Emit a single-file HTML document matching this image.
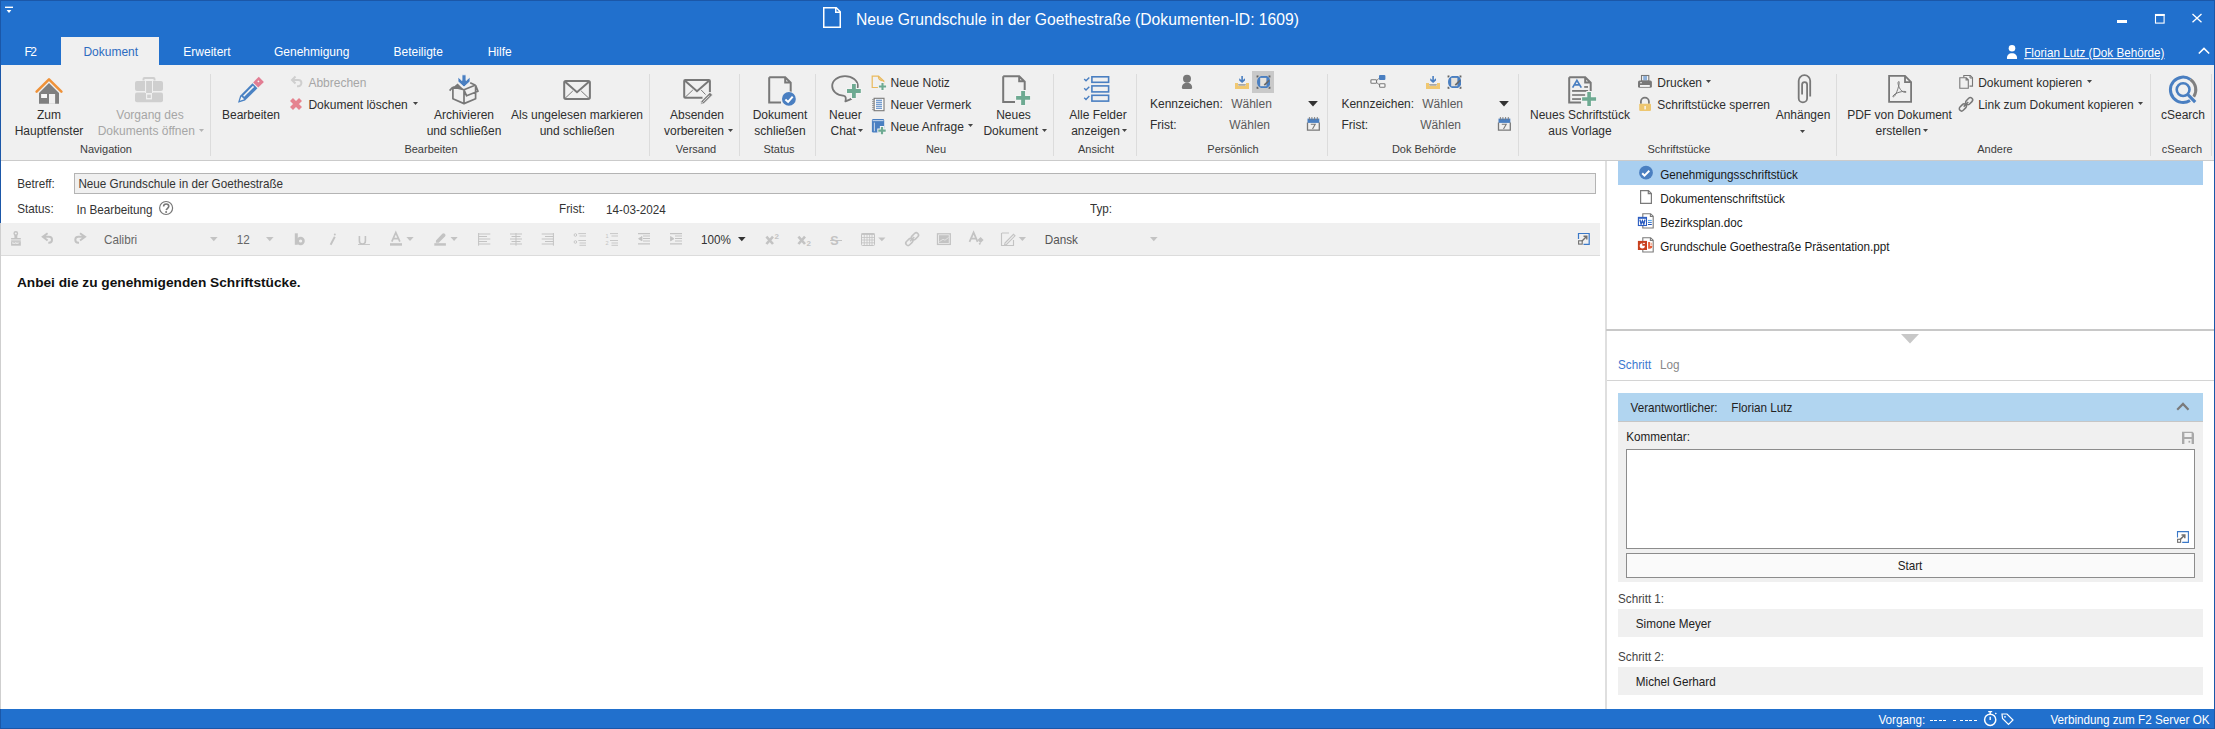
<!DOCTYPE html>
<html><head><meta charset="utf-8"><style>
html,body{margin:0;padding:0;}
body{width:2215px;height:729px;overflow:hidden;position:relative;background:#fff;font-family:"Liberation Sans", sans-serif;}
.t{position:absolute;white-space:nowrap;}
svg{overflow:visible}
</style></head><body>
<div style="position:absolute;left:0px;top:0px;width:2215px;height:65px;background:#2170cd"></div>
<div style="position:absolute;left:0px;top:65px;width:2215px;height:95px;background:#f0f0f0"></div>
<div style="position:absolute;left:0px;top:160px;width:2215px;height:1px;background:#cbcbcb"></div>
<div style="position:absolute;left:1px;top:223px;width:1599px;height:32px;background:#f0f0f0"></div>
<div style="position:absolute;left:1px;top:255px;width:1599px;height:1px;background:#dcdcdc"></div>
<div style="position:absolute;left:0px;top:709px;width:2215px;height:20px;background:#2170cd"></div>
<div style="position:absolute;left:0px;top:0px;width:1px;height:223px;background:#1b57a8"></div>
<div style="position:absolute;left:0px;top:223px;width:1px;height:486px;background:#cfcfcf"></div>
<div style="position:absolute;left:0px;top:709px;width:1px;height:20px;background:#1b57a8"></div>
<div style="position:absolute;left:2214px;top:0px;width:1px;height:729px;background:#1b57a8"></div>
<div style="position:absolute;left:0px;top:0px;width:2215px;height:1px;background:#1b57a8"></div>
<div style="position:absolute;left:0px;top:728px;width:2215px;height:1px;background:#1b57a8"></div>
<div class="t" style="left:856px;top:10.00px;font-size:15.7px;line-height:19px;color:#ffffff;font-weight:400;">Neue Grundschule in der Goethestraße (Dokumenten-ID: 1609)</div>
<div style="position:absolute;left:61px;top:37px;width:98px;height:28px;background:#f0f0f0"></div>
<div class="t" style="left:24.4px;top:44.50px;font-size:12px;line-height:15px;color:#fff;font-weight:400;letter-spacing:-1.4px;">F2</div>
<div class="t" style="left:83.4px;top:44.50px;font-size:12px;line-height:15px;color:#2d6cc0;font-weight:400;">Dokument</div>
<div class="t" style="left:183.3px;top:44.50px;font-size:12px;line-height:15px;color:#fff;font-weight:400;">Erweitert</div>
<div class="t" style="left:274px;top:44.50px;font-size:12px;line-height:15px;color:#fff;font-weight:400;">Genehmigung</div>
<div class="t" style="left:393.5px;top:44.50px;font-size:12px;line-height:15px;color:#fff;font-weight:400;">Beteiligte</div>
<div class="t" style="left:487.7px;top:44.50px;font-size:12px;line-height:15px;color:#fff;font-weight:400;">Hilfe</div>
<div class="t" style="left:2024.2px;top:44.50px;font-size:11.7px;line-height:15px;color:#fff;font-weight:400;transform:scaleY(1.1);transform-origin:0 12.0px;text-decoration:underline;">Florian Lutz (Dok Behörde)</div>
<div style="position:absolute;left:210px;top:74px;width:1px;height:82px;background:#dcdcdc"></div>
<div style="position:absolute;left:649px;top:74px;width:1px;height:82px;background:#dcdcdc"></div>
<div style="position:absolute;left:739px;top:74px;width:1px;height:82px;background:#dcdcdc"></div>
<div style="position:absolute;left:815px;top:74px;width:1px;height:82px;background:#dcdcdc"></div>
<div style="position:absolute;left:1053px;top:74px;width:1px;height:82px;background:#dcdcdc"></div>
<div style="position:absolute;left:1136px;top:74px;width:1px;height:82px;background:#dcdcdc"></div>
<div style="position:absolute;left:1327px;top:74px;width:1px;height:82px;background:#dcdcdc"></div>
<div style="position:absolute;left:1518px;top:74px;width:1px;height:82px;background:#dcdcdc"></div>
<div style="position:absolute;left:1836px;top:74px;width:1px;height:82px;background:#dcdcdc"></div>
<div style="position:absolute;left:2150px;top:74px;width:1px;height:82px;background:#dcdcdc"></div>
<div style="position:absolute;left:2211px;top:74px;width:1px;height:82px;background:#dcdcdc"></div>
<div class="t" style="left:49px;top:107.50px;font-size:12px;line-height:15px;color:#2e2e2e;font-weight:400;transform:translateX(-50%) ;transform-origin:0 11.5px;">Zum</div>
<div class="t" style="left:49px;top:123.50px;font-size:12px;line-height:15px;color:#2e2e2e;font-weight:400;transform:translateX(-50%) ;transform-origin:0 11.5px;">Hauptfenster</div>
<div class="t" style="left:150px;top:107.50px;font-size:12px;line-height:15px;color:#a6a6a6;font-weight:400;transform:translateX(-50%) ;transform-origin:0 11.5px;">Vorgang des</div>
<div class="t" style="left:97.7px;top:123.50px;font-size:12px;line-height:15px;color:#a6a6a6;font-weight:400;">Dokuments öffnen</div>
<div class="t" style="left:106px;top:142.00px;font-size:11px;line-height:14px;color:#3c3c3c;font-weight:400;transform:translateX(-50%) ;transform-origin:0 11.0px;">Navigation</div>
<div class="t" style="left:251px;top:107.50px;font-size:12px;line-height:15px;color:#2e2e2e;font-weight:400;transform:translateX(-50%) ;transform-origin:0 11.5px;">Bearbeiten</div>
<div class="t" style="left:308.4px;top:75.50px;font-size:12px;line-height:15px;color:#a6a6a6;font-weight:400;">Abbrechen</div>
<div class="t" style="left:308.4px;top:97.50px;font-size:12px;line-height:15px;color:#2e2e2e;font-weight:400;">Dokument löschen</div>
<div class="t" style="left:464px;top:107.50px;font-size:12px;line-height:15px;color:#2e2e2e;font-weight:400;transform:translateX(-50%) ;transform-origin:0 11.5px;">Archivieren</div>
<div class="t" style="left:464px;top:123.50px;font-size:12px;line-height:15px;color:#2e2e2e;font-weight:400;transform:translateX(-50%) ;transform-origin:0 11.5px;">und schließen</div>
<div class="t" style="left:577px;top:107.50px;font-size:12px;line-height:15px;color:#2e2e2e;font-weight:400;transform:translateX(-50%) ;transform-origin:0 11.5px;">Als ungelesen markieren</div>
<div class="t" style="left:577px;top:123.50px;font-size:12px;line-height:15px;color:#2e2e2e;font-weight:400;transform:translateX(-50%) ;transform-origin:0 11.5px;">und schließen</div>
<div class="t" style="left:431px;top:142.00px;font-size:11px;line-height:14px;color:#3c3c3c;font-weight:400;transform:translateX(-50%) ;transform-origin:0 11.0px;">Bearbeiten</div>
<div class="t" style="left:697px;top:107.50px;font-size:12px;line-height:15px;color:#2e2e2e;font-weight:400;transform:translateX(-50%) ;transform-origin:0 11.5px;">Absenden</div>
<div class="t" style="left:664px;top:123.50px;font-size:12px;line-height:15px;color:#2e2e2e;font-weight:400;">vorbereiten</div>
<div class="t" style="left:696px;top:142.00px;font-size:11px;line-height:14px;color:#3c3c3c;font-weight:400;transform:translateX(-50%) ;transform-origin:0 11.0px;">Versand</div>
<div class="t" style="left:780px;top:107.50px;font-size:12px;line-height:15px;color:#2e2e2e;font-weight:400;transform:translateX(-50%) ;transform-origin:0 11.5px;">Dokument</div>
<div class="t" style="left:780px;top:123.50px;font-size:12px;line-height:15px;color:#2e2e2e;font-weight:400;transform:translateX(-50%) ;transform-origin:0 11.5px;">schließen</div>
<div class="t" style="left:779px;top:142.00px;font-size:11px;line-height:14px;color:#3c3c3c;font-weight:400;transform:translateX(-50%) ;transform-origin:0 11.0px;">Status</div>
<div class="t" style="left:845.4px;top:107.50px;font-size:12px;line-height:15px;color:#2e2e2e;font-weight:400;transform:translateX(-50%) ;transform-origin:0 11.5px;">Neuer</div>
<div class="t" style="left:830.5px;top:123.50px;font-size:12px;line-height:15px;color:#2e2e2e;font-weight:400;">Chat</div>
<div class="t" style="left:890.5px;top:75.50px;font-size:12px;line-height:15px;color:#2e2e2e;font-weight:400;">Neue Notiz</div>
<div class="t" style="left:890.5px;top:97.50px;font-size:12px;line-height:15px;color:#2e2e2e;font-weight:400;">Neuer Vermerk</div>
<div class="t" style="left:890.5px;top:119.50px;font-size:12px;line-height:15px;color:#2e2e2e;font-weight:400;">Neue Anfrage</div>
<div class="t" style="left:936px;top:142.00px;font-size:11px;line-height:14px;color:#3c3c3c;font-weight:400;transform:translateX(-50%) ;transform-origin:0 11.0px;">Neu</div>
<div class="t" style="left:1013.5px;top:107.50px;font-size:12px;line-height:15px;color:#2e2e2e;font-weight:400;transform:translateX(-50%) ;transform-origin:0 11.5px;">Neues</div>
<div class="t" style="left:983.4px;top:123.50px;font-size:12px;line-height:15px;color:#2e2e2e;font-weight:400;">Dokument</div>
<div class="t" style="left:1098px;top:107.50px;font-size:12px;line-height:15px;color:#2e2e2e;font-weight:400;transform:translateX(-50%) ;transform-origin:0 11.5px;">Alle Felder</div>
<div class="t" style="left:1071.2px;top:123.50px;font-size:12px;line-height:15px;color:#2e2e2e;font-weight:400;">anzeigen</div>
<div class="t" style="left:1096px;top:142.00px;font-size:11px;line-height:14px;color:#3c3c3c;font-weight:400;transform:translateX(-50%) ;transform-origin:0 11.0px;">Ansicht</div>
<div class="t" style="left:1150px;top:96.50px;font-size:12px;line-height:15px;color:#2e2e2e;font-weight:400;">Kennzeichen:</div>
<div class="t" style="left:1150px;top:117.80px;font-size:12px;line-height:15px;color:#2e2e2e;font-weight:400;">Frist:</div>
<div class="t" style="left:1231.2px;top:96.50px;font-size:12px;line-height:15px;color:#5a5a5a;font-weight:400;">Wählen</div>
<div class="t" style="left:1229.3px;top:117.80px;font-size:12px;line-height:15px;color:#5a5a5a;font-weight:400;">Wählen</div>
<div class="t" style="left:1233px;top:142.00px;font-size:11px;line-height:14px;color:#3c3c3c;font-weight:400;transform:translateX(-50%) ;transform-origin:0 11.0px;">Persönlich</div>
<div class="t" style="left:1341.4px;top:96.50px;font-size:12px;line-height:15px;color:#2e2e2e;font-weight:400;">Kennzeichen:</div>
<div class="t" style="left:1341.4px;top:117.80px;font-size:12px;line-height:15px;color:#2e2e2e;font-weight:400;">Frist:</div>
<div class="t" style="left:1422.3px;top:96.50px;font-size:12px;line-height:15px;color:#5a5a5a;font-weight:400;">Wählen</div>
<div class="t" style="left:1420.3px;top:117.80px;font-size:12px;line-height:15px;color:#5a5a5a;font-weight:400;">Wählen</div>
<div class="t" style="left:1424px;top:142.00px;font-size:11px;line-height:14px;color:#3c3c3c;font-weight:400;transform:translateX(-50%) ;transform-origin:0 11.0px;">Dok Behörde</div>
<div class="t" style="left:1580px;top:107.50px;font-size:12px;line-height:15px;color:#2e2e2e;font-weight:400;transform:translateX(-50%) ;transform-origin:0 11.5px;">Neues Schriftstück</div>
<div class="t" style="left:1580px;top:123.50px;font-size:12px;line-height:15px;color:#2e2e2e;font-weight:400;transform:translateX(-50%) ;transform-origin:0 11.5px;">aus Vorlage</div>
<div class="t" style="left:1657.3px;top:75.50px;font-size:12px;line-height:15px;color:#2e2e2e;font-weight:400;">Drucken</div>
<div class="t" style="left:1657.3px;top:97.50px;font-size:12px;line-height:15px;color:#2e2e2e;font-weight:400;">Schriftstücke sperren</div>
<div class="t" style="left:1679px;top:142.00px;font-size:11px;line-height:14px;color:#3c3c3c;font-weight:400;transform:translateX(-50%) ;transform-origin:0 11.0px;">Schriftstücke</div>
<div class="t" style="left:1803px;top:107.50px;font-size:12px;line-height:15px;color:#2e2e2e;font-weight:400;transform:translateX(-50%) ;transform-origin:0 11.5px;">Anhängen</div>
<div class="t" style="left:1899.5px;top:107.50px;font-size:12px;line-height:15px;color:#2e2e2e;font-weight:400;transform:translateX(-50%) ;transform-origin:0 11.5px;">PDF von Dokument</div>
<div class="t" style="left:1875.5px;top:123.50px;font-size:12px;line-height:15px;color:#2e2e2e;font-weight:400;">erstellen</div>
<div class="t" style="left:1978.2px;top:75.50px;font-size:12px;line-height:15px;color:#2e2e2e;font-weight:400;">Dokument kopieren</div>
<div class="t" style="left:1978.2px;top:97.50px;font-size:12px;line-height:15px;color:#2e2e2e;font-weight:400;">Link zum Dokument kopieren</div>
<div class="t" style="left:1995px;top:142.00px;font-size:11px;line-height:14px;color:#3c3c3c;font-weight:400;transform:translateX(-50%) ;transform-origin:0 11.0px;">Andere</div>
<div class="t" style="left:2183px;top:107.50px;font-size:12px;line-height:15px;color:#2e2e2e;font-weight:400;transform:translateX(-50%) ;transform-origin:0 11.5px;">cSearch</div>
<div class="t" style="left:2182px;top:142.00px;font-size:11px;line-height:14px;color:#3c3c3c;font-weight:400;transform:translateX(-50%) ;transform-origin:0 11.0px;">cSearch</div>
<div class="t" style="left:17.3px;top:176.00px;font-size:11.7px;line-height:15px;color:#333;font-weight:400;transform:scaleY(1.1);transform-origin:0 12.0px;">Betreff:</div>
<div style="position:absolute;left:74px;top:173px;width:1522px;height:21px;background:#f0f0f0;box-sizing:border-box;border:1px solid #b4b4b4"></div>
<div class="t" style="left:78.4px;top:176.00px;font-size:11.7px;line-height:15px;color:#333;font-weight:400;transform:scaleY(1.1);transform-origin:0 12.0px;">Neue Grundschule in der Goethestraße</div>
<div class="t" style="left:17.3px;top:201.00px;font-size:11.7px;line-height:15px;color:#333;font-weight:400;transform:scaleY(1.1);transform-origin:0 12.0px;">Status:</div>
<div class="t" style="left:76.5px;top:202.00px;font-size:11.7px;line-height:15px;color:#333;font-weight:400;transform:scaleY(1.1);transform-origin:0 12.0px;">In Bearbeitung</div>
<div class="t" style="left:559px;top:201.00px;font-size:11.7px;line-height:15px;color:#333;font-weight:400;transform:scaleY(1.1);transform-origin:0 12.0px;">Frist:</div>
<div class="t" style="left:606px;top:202.00px;font-size:11.7px;line-height:15px;color:#333;font-weight:400;transform:scaleY(1.1);transform-origin:0 12.0px;">14-03-2024</div>
<div class="t" style="left:1090px;top:201.00px;font-size:11.7px;line-height:15px;color:#333;font-weight:400;transform:scaleY(1.1);transform-origin:0 12.0px;">Typ:</div>
<div class="t" style="left:104px;top:231.50px;font-size:11.7px;line-height:15px;color:#666;font-weight:400;transform:scaleY(1.1);transform-origin:0 12.0px;">Calibri</div>
<div class="t" style="left:236.7px;top:231.50px;font-size:11.7px;line-height:15px;color:#666;font-weight:400;transform:scaleY(1.1);transform-origin:0 12.0px;">12</div>
<div class="t" style="left:701px;top:231.80px;font-size:11.7px;line-height:15px;color:#333;font-weight:400;transform:scaleY(1.1);transform-origin:0 12.0px;">100%</div>
<div class="t" style="left:1044.7px;top:231.80px;font-size:11.7px;line-height:15px;color:#555;font-weight:400;transform:scaleY(1.1);transform-origin:0 12.0px;">Dansk</div>
<div class="t" style="left:16.9px;top:274.00px;font-size:13.7px;line-height:17px;color:#111;font-weight:700;">Anbei die zu genehmigenden Schriftstücke.</div>
<div style="position:absolute;left:1605px;top:161px;width:2px;height:548px;background:#dfdfdf"></div>
<div style="position:absolute;left:1618px;top:161px;width:585px;height:24px;background:#a9cff0"></div>
<div class="t" style="left:1660.2px;top:166.50px;font-size:11.7px;line-height:15px;color:#1a1a1a;font-weight:400;transform:scaleY(1.1);transform-origin:0 12.0px;">Genehmigungsschriftstück</div>
<div class="t" style="left:1660.2px;top:190.50px;font-size:11.7px;line-height:15px;color:#1a1a1a;font-weight:400;transform:scaleY(1.1);transform-origin:0 12.0px;">Dokumentenschriftstück</div>
<div class="t" style="left:1660.2px;top:214.50px;font-size:11.7px;line-height:15px;color:#1a1a1a;font-weight:400;transform:scaleY(1.1);transform-origin:0 12.0px;">Bezirksplan.doc</div>
<div class="t" style="left:1660.2px;top:238.50px;font-size:11.7px;line-height:15px;color:#1a1a1a;font-weight:400;transform:scaleY(1.1);transform-origin:0 12.0px;">Grundschule Goethestraße Präsentation.ppt</div>
<div style="position:absolute;left:1606px;top:329px;width:608px;height:2px;background:#c8c8c8"></div>
<div class="t" style="left:1618px;top:357.00px;font-size:11.7px;line-height:15px;color:#3b78d0;font-weight:400;transform:scaleY(1.1);transform-origin:0 12.0px;">Schritt</div>
<div class="t" style="left:1660px;top:357.00px;font-size:11.7px;line-height:15px;color:#888;font-weight:400;transform:scaleY(1.1);transform-origin:0 12.0px;">Log</div>
<div style="position:absolute;left:1607px;top:380px;width:607px;height:1px;background:#d4d4d4"></div>
<div style="position:absolute;left:1618px;top:393px;width:585px;height:28px;background:#b1d5f0"></div>
<div class="t" style="left:1630.5px;top:400.00px;font-size:11.7px;line-height:15px;color:#222;font-weight:400;transform:scaleY(1.1);transform-origin:0 12.0px;">Verantwortlicher:</div>
<div class="t" style="left:1731.3px;top:400.00px;font-size:11.7px;line-height:15px;color:#222;font-weight:400;transform:scaleY(1.1);transform-origin:0 12.0px;">Florian Lutz</div>
<div style="position:absolute;left:1618px;top:421px;width:585px;height:161px;background:#f0f0f0"></div>
<div class="t" style="left:1626.3px;top:429.00px;font-size:11.7px;line-height:15px;color:#222;font-weight:400;transform:scaleY(1.1);transform-origin:0 12.0px;">Kommentar:</div>
<div style="position:absolute;left:1626px;top:449px;width:569px;height:100px;background:#fff;box-sizing:border-box;border:1px solid #8c8c8c"></div>
<div style="position:absolute;left:1626px;top:553px;width:569px;height:25px;background:#fafafa;box-sizing:border-box;border:1px solid #8c8c8c"></div>
<div class="t" style="left:1910px;top:558.00px;font-size:11.7px;line-height:15px;color:#222;font-weight:400;transform:translateX(-50%) scaleY(1.1);transform-origin:0 12.0px;">Start</div>
<div class="t" style="left:1618px;top:590.50px;font-size:11.7px;line-height:15px;color:#444;font-weight:400;transform:scaleY(1.1);transform-origin:0 12.0px;">Schritt 1:</div>
<div style="position:absolute;left:1618px;top:609px;width:585px;height:28px;background:#f0f0f0"></div>
<div class="t" style="left:1635.8px;top:615.50px;font-size:11.7px;line-height:15px;color:#222;font-weight:400;transform:scaleY(1.1);transform-origin:0 12.0px;">Simone Meyer</div>
<div class="t" style="left:1618px;top:648.50px;font-size:11.7px;line-height:15px;color:#444;font-weight:400;transform:scaleY(1.1);transform-origin:0 12.0px;">Schritt 2:</div>
<div style="position:absolute;left:1618px;top:667px;width:585px;height:28px;background:#f0f0f0"></div>
<div class="t" style="left:1635.8px;top:673.50px;font-size:11.7px;line-height:15px;color:#222;font-weight:400;transform:scaleY(1.1);transform-origin:0 12.0px;">Michel Gerhard</div>
<div class="t" style="left:1878.4px;top:712.00px;font-size:11.7px;line-height:15px;color:#fff;font-weight:400;transform:scaleY(1.1);transform-origin:0 12.0px;">Vorgang:</div>
<div style="position:absolute;left:1929.5px;top:720px;width:3.3px;height:1.2px;background:#fff"></div>
<div style="position:absolute;left:1934px;top:720px;width:3.3px;height:1.2px;background:#fff"></div>
<div style="position:absolute;left:1938.5px;top:720px;width:3.3px;height:1.2px;background:#fff"></div>
<div style="position:absolute;left:1943px;top:720px;width:3.3px;height:1.2px;background:#fff"></div>
<div style="position:absolute;left:1952.5px;top:720px;width:3.3px;height:1.2px;background:#fff"></div>
<div style="position:absolute;left:1960px;top:720px;width:3.3px;height:1.2px;background:#fff"></div>
<div style="position:absolute;left:1964.5px;top:720px;width:3.3px;height:1.2px;background:#fff"></div>
<div style="position:absolute;left:1969px;top:720px;width:3.3px;height:1.2px;background:#fff"></div>
<div style="position:absolute;left:1973.5px;top:720px;width:3.3px;height:1.2px;background:#fff"></div>
<div class="t" style="left:2050.4px;top:712.00px;font-size:11.7px;line-height:15px;color:#fff;font-weight:400;transform:scaleY(1.1);transform-origin:0 12.0px;">Verbindung zum F2 Server OK</div>
<svg style="position:absolute;left:816px;top:2px" width="32" height="32" viewBox="0 0 32 32"><path d="M7.75,5.75 H20.3 L24.25,9.7 V25.25 H7.75 Z M19.75,5.75 V10.25 H24.25" fill="none" stroke="#fff" stroke-width="1.5"/></svg>
<svg style="position:absolute;left:0px;top:0px" width="20" height="20" viewBox="0 0 20 20"><rect x="5" y="6.6" width="8" height="1.4" fill="#fff"/><path d="M6.6,10 H11.4 L9,13 Z" fill="#fff"/></svg>
<div style="position:absolute;left:2117px;top:20px;width:10px;height:3px;background:#fff"></div>
<svg style="position:absolute;left:2150px;top:8px" width="20" height="20" viewBox="0 0 20 20"><rect x="5.5" y="6.5" width="8.6" height="8.6" fill="none" stroke="#fff" stroke-width="1.1"/><rect x="5" y="6" width="9.6" height="2" fill="#fff"/></svg>
<svg style="position:absolute;left:2186px;top:8px" width="20" height="20" viewBox="0 0 20 20"><path d="M6.5,6 L15.5,14.2 M15.5,6 L6.5,14.2" stroke="#fff" stroke-width="1.3"/></svg>
<svg style="position:absolute;left:2004px;top:42px" width="16" height="20" viewBox="0 0 16 20"><circle cx="8" cy="6.2" r="3.3" fill="#fff"/><path d="M3,17 C2.5,13 5,11.2 8,11.2 C11,11.2 13.5,13 13,17 Z" fill="#fff"/></svg>
<svg style="position:absolute;left:2194px;top:42px" width="20" height="16" viewBox="0 0 20 16"><path d="M4.8,11.5 L10,6.4 L15.2,11.5" fill="none" stroke="#fff" stroke-width="1.6"/></svg>
<svg style="position:absolute;left:32px;top:74px" width="34" height="34" viewBox="0 0 34 34"><path d="M7,18.9 L17,8.9 L27,18.9 V29.8 H7 Z" fill="#7f7f7f"/><rect x="9.1" y="20" width="5.9" height="4" fill="#f6f6f6"/><rect x="17" y="20" width="6.1" height="9.8" fill="#f0f0f0"/><path d="M4.6,17.6 L17,5.4 L29.4,17.6" fill="none" stroke="#ef9239" stroke-width="2.6" stroke-linecap="round" stroke-linejoin="round"/></svg>
<svg style="position:absolute;left:132px;top:74px" width="34" height="34" viewBox="0 0 34 34"><rect x="3" y="7" width="28" height="10" rx="2" fill="#cfcfcf"/><rect x="3" y="18.4" width="28" height="9.8" rx="2" fill="#cfcfcf"/><path d="M11.5,6.5 V5 Q11.5,4 12.5,4 H21.5 Q22.5,4 22.5,5 V6.5" fill="none" stroke="#cfcfcf" stroke-width="2"/><rect x="13" y="6" width="8" height="13" fill="#f0f0f0"/><rect x="14.1" y="7" width="5.9" height="12" fill="#cfcfcf"/><rect x="14" y="19" width="6" height="6.4" fill="#f0f0f0"/><rect x="15.2" y="20.6" width="3.6" height="3.4" fill="#cfcfcf"/></svg>
<svg style="position:absolute;left:234px;top:74px" width="34" height="34" viewBox="0 0 34 34"><g transform="translate(4,28.7) rotate(-45)"><path d="M0,0 L6.5,-3.5 H24 V3.5 H6.5 Z" fill="#4a82c3"/><path d="M2.6,0 L6.8,-2 V2 Z" fill="#f4f4f4"/><rect x="8.5" y="-1.3" width="14" height="1.5" fill="#f4f4f4"/><rect x="25" y="-3.6" width="8" height="7.2" fill="#e27d93"/><circle cx="29.5" cy="-0.6" r="0.9" fill="#f4f4f4"/></g></svg>
<svg style="position:absolute;left:446px;top:72px" width="36" height="36" viewBox="0 0 36 36"><path d="M6.9,15.5 L11.6,11.4 L18,17.8 Z" fill="#787878"/><path d="M6.9,15 V26.7 L18,31.6 L29.6,26.7 V14.5 M18,31.6 V17.8 M6.9,15 L18,17.8 L29.6,13 M6.9,15 L3.6,18.6 M29.6,13.2 L32,19.2 L20.6,23.8 L18.3,18.6 M24.2,10.8 L29.6,13.2" fill="none" stroke="#787878" stroke-width="1.7" stroke-linejoin="round"/><path d="M16,2.8 H20 V8.6 L24,5 V9.6 L18,15 L12,9.6 V5 L16,8.6 Z" fill="#4a7fc1" stroke="#f4f4f4" stroke-width="0.8"/></svg>
<svg style="position:absolute;left:560px;top:74px" width="36" height="36" viewBox="0 0 36 36"><rect x="4.2" y="6.9" width="25.7" height="18" rx="1.6" fill="none" stroke="#787878" stroke-width="2"/><path d="M4.8,7.5 L17,18.2 L29.3,7.5" fill="none" stroke="#787878" stroke-width="2"/><path d="M5,24.4 L12.8,17 M29,24.4 L21.2,17" stroke="#787878" stroke-width="1"/></svg>
<svg style="position:absolute;left:680px;top:74px" width="36" height="36" viewBox="0 0 36 36"><path d="M22.5,23.7 H5.2 Q4.2,23.7 4.2,22.7 V6.9 Q4.2,5.9 5.2,5.9 H28.9 Q29.9,5.9 29.9,6.9 V18" fill="none" stroke="#787878" stroke-width="2"/><path d="M4.8,6.5 L17,17.2 L29.3,6.5" fill="none" stroke="#787878" stroke-width="2"/><path d="M5,23.4 L12.8,16 M25.5,20.5 L21.2,16" stroke="#787878" stroke-width="1"/><g transform="translate(20.3,30.6) rotate(-45)"><path d="M0,0 L3,-1.9 H15.5 V1.9 H3 Z" fill="#787878" stroke="#f4f4f4" stroke-width="0.8"/><path d="M1.3,0 L3,-0.9 V0.9 Z" fill="#f4f4f4"/><rect x="4" y="-0.35" width="9" height="0.7" fill="#f4f4f4"/></g></svg>
<svg style="position:absolute;left:764px;top:72px" width="36" height="36" viewBox="0 0 36 36"><path d="M5.2,5.2 H21.2 L26.7,10.7 V22 M17,30.6 H5.2 V5.2 M21.2,5.2 V10.5 H26.7" fill="none" stroke="#787878" stroke-width="2"/><circle cx="24.9" cy="26.9" r="7.6" fill="#f0f0f0"/><circle cx="24.9" cy="26.9" r="6.9" fill="#4a7fc1"/><path d="M21.4,27.6 L24.1,29.9 L28.7,24.6" fill="none" stroke="#fff" stroke-width="2"/></svg>
<svg style="position:absolute;left:828px;top:72px" width="36" height="36" viewBox="0 0 36 36"><path d="M16.3,23.8 C8.5,23.5 4.2,19 4.2,14 C4.2,8.2 9.8,4.2 17,4.2 C24.2,4.2 29.8,8.2 29.8,14 C29.8,15 29.6,15.8 29.3,16.6 M16.3,23.8 C18,24.5 18,27 17.4,29.4 C19.5,28.6 22,27.6 23.7,26.6" fill="none" stroke="#787878" stroke-width="1.8" stroke-linejoin="round"/><path d="M24.0,12.1 h3.8 v5.0 h5.0 v3.8 h-5.0 v5.0 h-3.8 v-5.0 h-5.0 v-3.8 h5.0z" fill="none" stroke="#f4f4f4" stroke-width="2"/><path d="M24.0,12.1 h3.8 v5.0 h5.0 v3.8 h-5.0 v5.0 h-3.8 v-5.0 h-5.0 v-3.8 h5.0z" fill="#6eaa92"/></svg>
<svg style="position:absolute;left:998px;top:72px" width="36" height="36" viewBox="0 0 36 36"><path d="M5.2,4.2 H21.2 L26.7,9.7 V19 M17,29.9 H5.2 V4.2 M21.2,4.2 V9.2 H26.7" fill="none" stroke="#787878" stroke-width="2"/><path d="M23.150000000000002,18.9 h3.9 v5.05 h5.05 v3.9 h-5.05 v5.05 h-3.9 v-5.05 h-5.05 v-3.9 h5.05z" fill="none" stroke="#f4f4f4" stroke-width="2"/><path d="M23.150000000000002,18.9 h3.9 v5.05 h5.05 v3.9 h-5.05 v5.05 h-3.9 v-5.05 h-5.05 v-3.9 h5.05z" fill="#6eaa92"/></svg>
<svg style="position:absolute;left:1080px;top:72px" width="36" height="36" viewBox="0 0 36 36"><rect x="11.9" y="4.8" width="16.7" height="5.5" fill="none" stroke="#4a7fc1" stroke-width="1.6"/><rect x="11.9" y="13.9" width="16.7" height="6" fill="none" stroke="#4a7fc1" stroke-width="1.6"/><rect x="11.9" y="23.3" width="16.7" height="5.8" fill="none" stroke="#4a7fc1" stroke-width="1.6"/><path d="M4.2,7 L6,8.7 L9.3,5.4 M4.2,16.3 L6,18 L9.3,14.7 M4.2,25.7 L6,27.4 L9.3,24.1" fill="none" stroke="#4a7fc1" stroke-width="1.4"/></svg>
<svg style="position:absolute;left:1564px;top:72px" width="36" height="36" viewBox="0 0 36 36"><path d="M5.2,5.2 H21.2 L26.7,10.7 V20 M17,30.6 H5.2 V5.2 M21.2,5.2 V10.5 H26.7" fill="none" stroke="#787878" stroke-width="2"/><path d="M8.6,15.6 L12.9,8.3 L17.3,15.6 M10.4,12.8 H15.5" fill="none" stroke="#4a7fc1" stroke-width="1.7"/><rect x="20.2" y="14.1" width="3.8" height="1.7" fill="#787878"/><rect x="8.1" y="18" width="16" height="1.8" fill="#787878"/><rect x="8.1" y="22.2" width="13" height="1.6" fill="#787878"/><rect x="8.1" y="26.2" width="9" height="1.7" fill="#787878"/><path d="M23.3,20.0 h3.6 v5.2 h5.2 v3.6 h-5.2 v5.2 h-3.6 v-5.2 h-5.2 v-3.6 h5.2z" fill="none" stroke="#f4f4f4" stroke-width="2"/><path d="M23.3,20.0 h3.6 v5.2 h5.2 v3.6 h-5.2 v5.2 h-3.6 v-5.2 h-5.2 v-3.6 h5.2z" fill="#6eaa92"/></svg>
<svg style="position:absolute;left:1790px;top:70px" width="30" height="38" viewBox="0 0 30 38"><path d="M20.2,26.6 V10.85 A5.75,5.75 0 0 0 8.7,10.85 V28.2 A4.2,4.2 0 0 0 17.1,28.2 V14.6 A2.5,2.5 0 0 0 12.1,14.6 V24.5" fill="none" stroke="#787878" stroke-width="1.8"/></svg>
<svg style="position:absolute;left:1884px;top:72px" width="32" height="34" viewBox="0 0 32 34"><path d="M5.1,3.9 H21 L27.1,10 V29.9 H5.1 Z M21,3.9 V10.2 H27.1" fill="none" stroke="#787878" stroke-width="1.8"/><path d="M14.7,9.5 C13.6,10 14,12 14.7,14 C15.5,16.5 17,18.8 19.5,20 C21,20.6 22.5,20.6 22,19.8 C21.4,19 18,19.4 15,20.3 C12.5,21 10,22.5 9,24 C8.4,25 9.5,25.2 10.4,24.2 C12,22.5 14,17 14.9,13 C15.3,11 15.4,9.3 14.7,9.5 Z" fill="none" stroke="#787878" stroke-width="1"/></svg>
<svg style="position:absolute;left:2164px;top:72px" width="38" height="36" viewBox="0 0 38 36"><path d="M26.02,28.45 A12.7,12.7 0 1 1 26.39,7.4" fill="none" stroke="#4a7fc1" stroke-width="3"/><path d="M26.39,7.4 A12.7,12.7 0 0 1 29.75,24.72" fill="none" stroke="#808080" stroke-width="3"/><circle cx="19.1" cy="17.6" r="6.4" fill="none" stroke="#4a7fc1" stroke-width="2.6"/><path d="M23.8,22.5 L31.2,30.1" stroke="#4a7fc1" stroke-width="3.2"/></svg>
<svg style="position:absolute;left:286px;top:72px" width="20" height="20" viewBox="0 0 20 20"><path d="M9.5,4.5 L6,8 L9.5,11.5 M6,8 H12.3 A3,3 0 0 1 12.3,14.2 H11" fill="none" stroke="#cfcfcf" stroke-width="2"/></svg>
<svg style="position:absolute;left:286px;top:94px" width="20" height="20" viewBox="0 0 20 20"><path d="M5.5,5.5 L14.5,14.5 M14.5,5.5 L5.5,14.5" stroke="#e5838f" stroke-width="4.2"/></svg>
<svg style="position:absolute;left:868px;top:72px" width="22" height="22" viewBox="0 0 22 22"><path d="M4.2,4.2 H10.5 L15.8,9 V15.5 H4.2 Z" fill="none" stroke="#e9b95c" stroke-width="1.2"/><path d="M10.5,4.2 C10,6.5 11.5,8.5 15.8,9" fill="none" stroke="#e9b95c" stroke-width="1.2"/><path d="M13.45,10.9 h2.1 v2.55 h2.55 v2.1 h-2.55 v2.55 h-2.1 v-2.55 h-2.55 v-2.1 h2.55z" fill="none" stroke="#f4f4f4" stroke-width="2"/><path d="M13.45,10.9 h2.1 v2.55 h2.55 v2.1 h-2.55 v2.55 h-2.1 v-2.55 h-2.55 v-2.1 h2.55z" fill="#6eaa92"/></svg>
<svg style="position:absolute;left:868px;top:94px" width="22" height="22" viewBox="0 0 22 22"><rect x="6.1" y="4.3" width="9.9" height="12.4" fill="#fafafa" stroke="#787878" stroke-width="1.1"/><path d="M4,5.6 H6.6 M4,7.6 H6.6 M4,9.6 H6.6 M4,11.6 H6.6 M4,13.6 H6.6 M4,15.6 H6.6" stroke="#8a8a8a" stroke-width="0.8"/><path d="M8,6.3 H14 M8,8.3 H14 M8,10.3 H14 M8,12.3 H14 M8,14.3 H14" stroke="#4a7fc1" stroke-width="1.1"/></svg>
<svg style="position:absolute;left:868px;top:116px" width="22" height="22" viewBox="0 0 22 22"><rect x="3.9" y="3" width="12.3" height="13.6" rx="1.4" fill="#4a7fc1"/><rect x="4.6" y="4.3" width="10.9" height="0.8" fill="#e8eef8"/><rect x="5.9" y="6.6" width="0.8" height="8.6" fill="#e8eef8"/><path d="M12.9,10.899999999999999 h2.2 v2.6 h2.6 v2.2 h-2.6 v2.6 h-2.2 v-2.6 h-2.6 v-2.2 h2.6z" fill="none" stroke="#f4f4f4" stroke-width="2"/><path d="M12.9,10.899999999999999 h2.2 v2.6 h2.6 v2.2 h-2.6 v2.6 h-2.2 v-2.6 h-2.6 v-2.2 h2.6z" fill="#6eaa92"/></svg>
<svg style="position:absolute;left:1176px;top:70px" width="20" height="22" viewBox="0 0 20 22"><circle cx="11" cy="8.7" r="4" fill="#787878"/><path d="M6.8,19 Q5.9,19 5.9,17.6 C5.9,14.6 8,12.8 11,12.8 C14,12.8 16.1,14.6 16.1,17.6 Q16.1,19 15.2,19 Z" fill="#787878"/></svg>
<svg style="position:absolute;left:1232px;top:70px" width="20" height="22" viewBox="0 0 20 22"><path d="M3,12.9 H6 V15.7 H14 V12.9 H17 V19 H3 Z" fill="#f0c872"/><path d="M6,14.1 H14 L13.4,15.7 H6.6 Z" fill="#a9a9a9"/><path d="M9.3,6.1 H10.9 V9.9 L13,8.2 V10.6 L10.1,13.1 L7.2,10.6 V8.2 L9.3,9.9 Z" fill="#4a7fc1"/></svg>
<div style="position:absolute;left:1252px;top:71px;width:22px;height:22px;background:#c9c9c9"></div>
<svg style="position:absolute;left:1256px;top:70px" width="20" height="22" viewBox="0 0 20 22"><path d="M1.2,7.5 V6.2 H2.5 M12.5,6.2 H13.8 V7.5 M1.2,16.8 V18.1 H2.5 M12.5,18.1 H13.8 V16.8" fill="none" stroke="#5a5a5a" stroke-width="1.2"/><path d="M5,6.1 H11 Q14,7.5 14,10 V14.2 Q14,16.7 11,18.1 H5 Q1,16.7 1,12.1 Q1,7.5 5,6.1 Z" fill="#4a7fc1"/><rect x="4.2" y="7.9" width="6.2" height="8.3" fill="#e6e2dc"/><path d="M8.3,15.2 L13.2,10.3" stroke="#6a6a6a" stroke-width="1.7"/></svg>
<svg style="position:absolute;left:1423px;top:70px" width="20" height="22" viewBox="0 0 20 22"><path d="M3,12.9 H6 V15.7 H14 V12.9 H17 V19 H3 Z" fill="#f0c872"/><path d="M6,14.1 H14 L13.4,15.7 H6.6 Z" fill="#a9a9a9"/><path d="M9.3,6.1 H10.9 V9.9 L13,8.2 V10.6 L10.1,13.1 L7.2,10.6 V8.2 L9.3,9.9 Z" fill="#4a7fc1"/></svg>
<svg style="position:absolute;left:1447px;top:70px" width="20" height="22" viewBox="0 0 20 22"><path d="M1.2,7.5 V6.2 H2.5 M12.5,6.2 H13.8 V7.5 M1.2,16.8 V18.1 H2.5 M12.5,18.1 H13.8 V16.8" fill="none" stroke="#5a5a5a" stroke-width="1.2"/><path d="M5,6.1 H11 Q14,7.5 14,10 V14.2 Q14,16.7 11,18.1 H5 Q1,16.7 1,12.1 Q1,7.5 5,6.1 Z" fill="#4a7fc1"/><rect x="4.2" y="7.9" width="6.2" height="8.3" fill="#e6e2dc"/><path d="M8.3,15.2 L13.2,10.3" stroke="#6a6a6a" stroke-width="1.7"/></svg>
<svg style="position:absolute;left:1364px;top:70px" width="24" height="22" viewBox="0 0 24 22"><rect x="15" y="4.9" width="6.4" height="5" rx="1" fill="#4a7fc1"/><rect x="6.9" y="9.8" width="5.6" height="3.4" rx="0.8" fill="#fafafa" stroke="#787878" stroke-width="1.1"/><rect x="15.6" y="13.7" width="5.4" height="3.6" rx="0.8" fill="#fafafa" stroke="#787878" stroke-width="1.1"/><path d="M12.5,10.8 L15,8.2 M12.5,12.4 L15.6,15" stroke="#787878" stroke-width="0.9"/></svg>
<svg style="position:absolute;left:1300px;top:94px" width="26" height="42" viewBox="0 0 26 42"><path d="M8.1,6.9 H17.9 L13,12.4 Z" fill="#333"/><rect x="7.5" y="24.6" width="11.8" height="4.3" fill="#4a7fc1"/><path d="M7.5,28.5 V36.2 H19.3 V28.5" fill="none" stroke="#787878" stroke-width="1.3"/><path d="M9.4,23 V26 M11.9,23 V26 M14.6,23 V26 M17.3,23 V26" stroke="#787878" stroke-width="0.9"/><path d="M10.8,30.3 H15.2 L12.5,35" fill="none" stroke="#787878" stroke-width="1.1"/></svg>
<svg style="position:absolute;left:1491px;top:94px" width="26" height="42" viewBox="0 0 26 42"><path d="M8.1,6.9 H17.9 L13,12.4 Z" fill="#333"/><rect x="7.5" y="24.6" width="11.8" height="4.3" fill="#4a7fc1"/><path d="M7.5,28.5 V36.2 H19.3 V28.5" fill="none" stroke="#787878" stroke-width="1.3"/><path d="M9.4,23 V26 M11.9,23 V26 M14.6,23 V26 M17.3,23 V26" stroke="#787878" stroke-width="0.9"/><path d="M10.8,30.3 H15.2 L12.5,35" fill="none" stroke="#787878" stroke-width="1.1"/></svg>
<svg style="position:absolute;left:1634px;top:72px" width="22" height="22" viewBox="0 0 22 22"><rect x="7.5" y="3.5" width="7.3" height="5.6" fill="#f4f4f4" stroke="#787878" stroke-width="1.1"/><rect x="9.2" y="4" width="3.8" height="4.4" fill="#8fb0d8"/><rect x="4" y="8.6" width="13.9" height="7.2" rx="1.6" fill="#787878"/><rect x="6" y="13" width="9.8" height="1.9" fill="#f4f4f4"/><rect x="6" y="10.3" width="2" height="0.9" fill="#f4f4f4"/></svg>
<svg style="position:absolute;left:1634px;top:94px" width="22" height="22" viewBox="0 0 22 22"><path d="M6.9,9.8 V7.6 A4,4 0 0 1 14.9,7.6 V9.8" fill="none" stroke="#787878" stroke-width="1.8"/><rect x="5.2" y="9.7" width="11.8" height="7.2" rx="0.8" fill="#edc670"/><rect x="10.4" y="12" width="1.4" height="3.4" fill="#f8f8f8"/></svg>
<svg style="position:absolute;left:1954px;top:72px" width="22" height="22" viewBox="0 0 22 22"><path d="M9.8,5.4 V3.5 H16.3 L18.5,5.7 V14.1 H15.5" fill="none" stroke="#787878" stroke-width="1.1"/><path d="M16,3.5 V6 H18.5" fill="none" stroke="#787878" stroke-width="1"/><path d="M5.8,5.8 H12.3 L14.3,7.8 V16.3 H5.8 Z M12.1,5.8 V8 H14.3" fill="#f0f0f0" stroke="#787878" stroke-width="1.1"/></svg>
<svg style="position:absolute;left:1954px;top:94px" width="22" height="22" viewBox="0 0 22 22"><g transform="rotate(-45 12 10)"><rect x="3.3" y="7.9" width="8" height="4.6" rx="2.3" fill="none" stroke="#787878" stroke-width="1.5"/><rect x="12.2" y="7.9" width="8" height="4.6" rx="2.3" fill="none" stroke="#787878" stroke-width="1.5"/><path d="M8.5,10.2 H15" stroke="#787878" stroke-width="1.5"/></g></svg>
<svg style="position:absolute;left:413px;top:102px" width="6" height="4" viewBox="0 0 6 4"><path d="M0,0 H5 L2.5,3 Z" fill="#444"/></svg>
<svg style="position:absolute;left:968px;top:124px" width="6" height="4" viewBox="0 0 6 4"><path d="M0,0 H5 L2.5,3 Z" fill="#444"/></svg>
<svg style="position:absolute;left:198.7px;top:129px" width="6" height="4" viewBox="0 0 6 4"><path d="M0,0 H5 L2.5,3 Z" fill="#b4b4b4"/></svg>
<svg style="position:absolute;left:728px;top:129px" width="6" height="4" viewBox="0 0 6 4"><path d="M0,0 H5 L2.5,3 Z" fill="#444"/></svg>
<svg style="position:absolute;left:857.8px;top:129px" width="6" height="4" viewBox="0 0 6 4"><path d="M0,0 H5 L2.5,3 Z" fill="#444"/></svg>
<svg style="position:absolute;left:1042px;top:129px" width="6" height="4" viewBox="0 0 6 4"><path d="M0,0 H5 L2.5,3 Z" fill="#444"/></svg>
<svg style="position:absolute;left:1121.8px;top:129px" width="6" height="4" viewBox="0 0 6 4"><path d="M0,0 H5 L2.5,3 Z" fill="#444"/></svg>
<svg style="position:absolute;left:1705.5px;top:80px" width="6" height="4" viewBox="0 0 6 4"><path d="M0,0 H5 L2.5,3 Z" fill="#444"/></svg>
<svg style="position:absolute;left:1799.5px;top:130px" width="6" height="4" viewBox="0 0 6 4"><path d="M0,0 H5 L2.5,3 Z" fill="#444"/></svg>
<svg style="position:absolute;left:1923px;top:129px" width="6" height="4" viewBox="0 0 6 4"><path d="M0,0 H5 L2.5,3 Z" fill="#444"/></svg>
<svg style="position:absolute;left:2087px;top:80px" width="6" height="4" viewBox="0 0 6 4"><path d="M0,0 H5 L2.5,3 Z" fill="#444"/></svg>
<svg style="position:absolute;left:2138px;top:102px" width="6" height="4" viewBox="0 0 6 4"><path d="M0,0 H5 L2.5,3 Z" fill="#444"/></svg>
<svg style="position:absolute;left:154px;top:198px" width="24" height="22" viewBox="0 0 24 22"><circle cx="12.1" cy="10" r="6.5" fill="none" stroke="#777" stroke-width="1.2"/><path d="M9.6,8.6 C9.6,6.8 10.7,6 12.2,6 C13.8,6 14.8,7 14.8,8.3 C14.8,10 12.6,10.4 12.2,12.2" fill="none" stroke="#777" stroke-width="1.6"/><circle cx="12.1" cy="14" r="1" fill="#777"/></svg>
<svg style="position:absolute;left:4px;top:226px" width="30" height="26" viewBox="0 0 30 26"><circle cx="11.8" cy="7.4" r="1.7" fill="none" stroke="#c3c3c3" stroke-width="1.4"/><rect x="10.4" y="8.8" width="2.9" height="3.4" fill="#c3c3c3"/><rect x="7.1" y="12" width="9.7" height="1.1" fill="#c3c3c3"/><rect x="7.1" y="13.6" width="9.7" height="1" fill="#c3c3c3"/><rect x="7.1" y="15.2" width="9.7" height="4.5" fill="#c3c3c3"/><path d="M8.5,16.2 L9,18 L9.8,16.6 L10.5,18 L11.5,16.4 L12.2,18 L13,16.4 L13.8,18 L15,16.2" fill="none" stroke="#f0f0f0" stroke-width="0.7"/></svg>
<svg style="position:absolute;left:36px;top:226px" width="20" height="26" viewBox="0 0 20 26"><path d="M11.6,7.3 L6.8,10.8 L11.6,14.5 M6.8,10.8 H13 A3,3 0 0 1 13,16.8 H12.3" fill="none" stroke="#c3c3c3" stroke-width="2"/></svg>
<svg style="position:absolute;left:68px;top:226px" width="20" height="26" viewBox="0 0 20 26"><path d="M12,7.3 L17,10.8 L12,14.5 M17,10.8 H10.3 A3,3 0 0 0 10.3,16.8 H11" fill="none" stroke="#c3c3c3" stroke-width="2"/></svg>
<svg style="position:absolute;left:210.3px;top:237px" width="8" height="5" viewBox="0 0 8 5"><path d="M0,0 H7.6 L3.8,4.2 Z" fill="#c3c3c3"/></svg>
<svg style="position:absolute;left:266px;top:237px" width="8" height="5" viewBox="0 0 8 5"><path d="M0,0 H7.6 L3.8,4.2 Z" fill="#c3c3c3"/></svg>
<svg style="position:absolute;left:290px;top:230px" width="18" height="18" viewBox="0 0 18 18"><path d="M6.3,3.3 V14.8" stroke="#c3c3c3" stroke-width="3"/><circle cx="10.6" cy="11" r="2.9" fill="none" stroke="#c3c3c3" stroke-width="2.6"/></svg>
<svg style="position:absolute;left:324px;top:230px" width="16" height="18" viewBox="0 0 16 18"><path d="M10.8,6.8 L6.6,14.8" stroke="#c3c3c3" stroke-width="1.9"/><circle cx="10.8" cy="4.4" r="1" fill="#c3c3c3"/></svg>
<svg style="position:absolute;left:356px;top:230px" width="16" height="18" viewBox="0 0 16 18"><path d="M3.4,6 V11 A3,3 0 0 0 9.4,11 V6" fill="none" stroke="#c3c3c3" stroke-width="1.6"/><rect x="2" y="14.1" width="11.9" height="0.9" fill="#c3c3c3"/></svg>
<svg style="position:absolute;left:388px;top:230px" width="28" height="18" viewBox="0 0 28 18"><path d="M3.8,11.6 L7.8,2.5 L11.9,11.6 M5.2,8.6 H10.4" fill="none" stroke="#c3c3c3" stroke-width="1.7"/><rect x="2" y="13.2" width="12" height="2.5" fill="#c3c3c3"/><path d="M18.4,7 H25.7 L22,11 Z" fill="#c3c3c3"/></svg>
<svg style="position:absolute;left:432px;top:230px" width="28" height="18" viewBox="0 0 28 18"><path d="M4,10.5 L10.3,3.8 Q11.5,2.6 12.7,3.8 L13,4.1 Q14.2,5.3 13,6.5 L6.7,12.8 L3.8,12.8 Z" fill="#c3c3c3"/><rect x="2.3" y="13.2" width="11.6" height="2.5" fill="#c3c3c3"/><path d="M18.5,7 H25.7 L22.1,11 Z" fill="#c3c3c3"/></svg>
<svg style="position:absolute;left:476px;top:230px" width="16" height="18" viewBox="0 0 16 18"><path d="M2.6,3 V15.7" stroke="#c3c3c3" stroke-width="1"/><path d="M2.6,4 H14.3 M2.6,6.5 H11 M2.6,9 H14.3 M2.6,11.5 H11 M2.6,14 H14.3 " stroke="#c3c3c3" stroke-width="1.1"/></svg>
<svg style="position:absolute;left:508px;top:230px" width="16" height="18" viewBox="0 0 16 18"><path d="M8,3 V15.7" stroke="#c3c3c3" stroke-width="1"/><path d="M2,4 H14 M3.5,6.5 H12.5 M2,9 H14 M3.5,11.5 H12.5 M2,14 H14 " stroke="#c3c3c3" stroke-width="1.1"/></svg>
<svg style="position:absolute;left:540px;top:230px" width="16" height="18" viewBox="0 0 16 18"><path d="M13.4,3 V15.7" stroke="#c3c3c3" stroke-width="1"/><path d="M1.7,4 H13.4 M5,6.5 H13.4 M1.7,9 H13.4 M5,11.5 H13.4 M1.7,14 H13.4 " stroke="#c3c3c3" stroke-width="1.1"/></svg>
<svg style="position:absolute;left:572px;top:230px" width="16" height="18" viewBox="0 0 16 18"><circle cx="3.4" cy="5" r="1.3" fill="none" stroke="#c3c3c3" stroke-width="0.9"/><circle cx="3.4" cy="12" r="1.3" fill="none" stroke="#c3c3c3" stroke-width="0.9"/><path d="M6.3,3.6 H14 M7.5,6 H14 M6.3,10.5 H14 M7.5,13 H14 M7.5,15.3 H14 " stroke="#c3c3c3" stroke-width="0.9"/></svg>
<svg style="position:absolute;left:604px;top:230px" width="16" height="18" viewBox="0 0 16 18"><text x="1.5" y="7.5" font-size="5.5" font-family="Liberation Sans" fill="#c3c3c3">1</text><text x="1.5" y="14.5" font-size="5.5" font-family="Liberation Sans" fill="#c3c3c3">2</text><path d="M6,3.6 H14 M7.5,6 H14 M6,10.5 H14 M7.5,13 H14 M7.5,15.3 H14 " stroke="#c3c3c3" stroke-width="0.9"/></svg>
<svg style="position:absolute;left:636px;top:230px" width="16" height="18" viewBox="0 0 16 18"><path d="M2,3.6 H14 M7,6 H14 M7,8.5 H14 M7,11 H14 M2,13.8 H14" stroke="#c3c3c3" stroke-width="1.2"/><path d="M6,6.5 L2.5,8.7 L6,10.9 Z M3,8.7 H6" fill="#c3c3c3" stroke="#c3c3c3" stroke-width="0.8"/></svg>
<svg style="position:absolute;left:668px;top:230px" width="16" height="18" viewBox="0 0 16 18"><path d="M2,3.6 H14 M7,6 H14 M7,8.5 H14 M7,11 H14 M2,13.8 H14" stroke="#c3c3c3" stroke-width="1.2"/><path d="M2.5,6.5 L6,8.7 L2.5,10.9 Z" fill="#c3c3c3" stroke="#c3c3c3" stroke-width="0.8"/></svg>
<svg style="position:absolute;left:737.7px;top:237px" width="8" height="5" viewBox="0 0 8 5"><path d="M0,0 H7.6 L3.8,4.2 Z" fill="#333"/></svg>
<svg style="position:absolute;left:760px;top:230px" width="20" height="18" viewBox="0 0 20 18"><path d="M6.4,6.6 L13,14 M13,6.6 L6.4,14" stroke="#c3c3c3" stroke-width="2.6"/></svg>
<div class="t" style="left:774.5px;top:231.50px;font-size:8px;line-height:10px;color:#c3c3c3;font-weight:700;">2</div>
<svg style="position:absolute;left:792px;top:230px" width="20" height="18" viewBox="0 0 20 18"><path d="M6.4,6.6 L13,14 M13,6.6 L6.4,14" stroke="#c3c3c3" stroke-width="2.6"/></svg>
<div class="t" style="left:806.5px;top:239.10px;font-size:8px;line-height:10px;color:#c3c3c3;font-weight:700;">2</div>
<div class="t" style="left:830.3px;top:233.50px;font-size:12.5px;line-height:15px;color:#c3c3c3;font-weight:700;">S</div>
<div style="position:absolute;left:830px;top:240px;width:12px;height:1.2px;background:#c3c3c3"></div>
<svg style="position:absolute;left:860px;top:231px" width="28" height="18" viewBox="0 0 28 18"><rect x="1.5" y="2.5" width="13" height="12" rx="1" fill="none" stroke="#c3c3c3" stroke-width="1"/><rect x="1.5" y="2.3" width="13" height="1.6" fill="#c3c3c3"/><path d="M1.5,6.5 H14.5 M1.5,9 H14.5 M1.5,11.8 H14.5 M4.3,3 V14.5 M7,3 V14.5 M9.6,3 V14.5 M12,3 V14.5" stroke="#c3c3c3" stroke-width="0.8"/><path d="M18.2,6.4 H25.5 L21.9,10.3 Z" fill="#c3c3c3"/></svg>
<svg style="position:absolute;left:902px;top:230px" width="20" height="18" viewBox="0 0 20 18"><g transform="rotate(-45 10 9)"><rect x="2" y="6.9" width="8" height="4.6" rx="2.3" fill="none" stroke="#c3c3c3" stroke-width="1.6"/><rect x="10" y="6.9" width="8" height="4.6" rx="2.3" fill="none" stroke="#c3c3c3" stroke-width="1.6"/><path d="M7,9.2 H13" stroke="#c3c3c3" stroke-width="1.6"/></g></svg>
<svg style="position:absolute;left:934px;top:230px" width="20" height="18" viewBox="0 0 20 18"><rect x="3.5" y="3.8" width="12.8" height="10.6" fill="none" stroke="#c3c3c3" stroke-width="1.3"/><rect x="5" y="5.2" width="9.8" height="7.8" fill="#c3c3c3"/><path d="M5.5,11.5 L9,9.3 L11,10.2 L14.5,7.5" fill="none" stroke="#e8e8e8" stroke-width="0.8"/></svg>
<svg style="position:absolute;left:966px;top:230px" width="22" height="18" viewBox="0 0 22 18"><path d="M3.5,11.8 L7.6,2.4 L11.6,11.8 M5,8.7 H10.2" fill="none" stroke="#c3c3c3" stroke-width="1.8"/><path d="M11.5,10 L14.6,7 L17.6,10 L14.6,13 Z M12.6,13.8 L13.8,12.6 L15,13.8 L13.8,15 Z" fill="#c3c3c3"/></svg>
<svg style="position:absolute;left:998px;top:230px" width="30" height="18" viewBox="0 0 30 18"><path d="M3.8,3 H11 M3.5,3 V15.5 H15.5 V10" fill="none" stroke="#c3c3c3" stroke-width="1.1"/><path d="M7,13 L15.5,4.3 L17,5.8 L8.5,14.5 L6.6,14.9 Z" fill="none" stroke="#c3c3c3" stroke-width="1.1"/><path d="M20.7,7 H28 L24.4,11 Z" fill="#c3c3c3"/></svg>
<svg style="position:absolute;left:1150.2px;top:237px" width="8" height="5" viewBox="0 0 8 5"><path d="M0,0 H7.6 L3.8,4.2 Z" fill="#c3c3c3"/></svg>
<svg style="position:absolute;left:1574px;top:228px" width="20" height="22" viewBox="0 0 20 22"><path d="M4.5,11 V5.5 H15.2 V16.3 H9.5" fill="none" stroke="#3a78c8" stroke-width="1.2"/><rect x="4.6" y="12.8" width="3.6" height="3.3" fill="none" stroke="#707070" stroke-width="1.1"/><path d="M7.8,13.2 L12.5,8.5 M9.5,8.3 H12.8 V11.6" fill="none" stroke="#707070" stroke-width="1.4"/></svg>
<svg style="position:absolute;left:1634px;top:162px" width="24" height="22" viewBox="0 0 24 22"><circle cx="12" cy="10.7" r="6.9" fill="#4a7fc1"/><path d="M8.2,11.2 L10.5,13.6 L15.3,8.8" fill="none" stroke="#fff" stroke-width="2"/></svg>
<svg style="position:absolute;left:1634px;top:186px" width="24" height="22" viewBox="0 0 24 22"><path d="M6.6,4.6 H14.5 L17.4,7.5 V17.4 H6.6 Z M14.3,4.6 V7.6 H17.4" fill="#fff" stroke="#7a7a7a" stroke-width="1.2"/></svg>
<svg style="position:absolute;left:1634px;top:208px" width="24" height="24" viewBox="0 0 24 24"><path d="M8.8,5.7 H16.6 L19.2,8.3 V20 H8.8 Z M16.4,5.7 V8.5 H19.2" fill="#fff" stroke="#7a7a7a" stroke-width="1.1"/><rect x="4.4" y="9.4" width="8.1" height="8.1" fill="#fff" stroke="#2b5cc0" stroke-width="1.1"/><rect x="4.4" y="9.6" width="8.1" height="1.2" fill="#2b5cc0"/><path d="M5.9,11.6 L7.1,16.1 L8.45,12.8 L9.8,16.1 L11,11.6" fill="none" stroke="#2b5cc0" stroke-width="1.4"/><path d="M14,12.4 H17.8" stroke="#49a0ea" stroke-width="1"/><path d="M14,14.4 H17.8" stroke="#2d6fd0" stroke-width="1"/><path d="M14,16.5 H17.8" stroke="#2050b0" stroke-width="1"/></svg>
<svg style="position:absolute;left:1634px;top:232px" width="24" height="24" viewBox="0 0 24 24"><path d="M8.8,5.7 H16.6 L19.2,8.3 V20 H8.8 Z M16.4,5.7 V8.5 H19.2" fill="#fff" stroke="#7a7a7a" stroke-width="1.1"/><rect x="3.9" y="8.9" width="9.1" height="9.1" fill="#c8401e"/><path d="M8.3,11.2 A2.6,2.6 0 1 0 10.9,13.8 H8.3 Z" fill="#fff"/><rect x="9" y="10.9" width="2" height="0.9" fill="#fff"/><path d="M14.1,10.1 V16.7 H16 A3,3 0 0 0 18.5,13.7 H16 V10.1 Z" fill="#e8603a"/><path d="M16.4,10.2 A2.6,2.6 0 0 1 18.6,12.9 H16.4 Z" fill="#f4b39c"/></svg>
<svg style="position:absolute;left:1900px;top:333px" width="20" height="12" viewBox="0 0 20 12"><path d="M1,1 H19 L10,10.6 Z" fill="#c8c8c8"/></svg>
<svg style="position:absolute;left:2174px;top:398px" width="18" height="16" viewBox="0 0 18 16"><path d="M3.2,11.7 L9,5.9 L14.5,11.7" fill="none" stroke="#7a7a7a" stroke-width="2.2"/></svg>
<div style="position:absolute;left:1618px;top:421px;width:585px;height:1px;background:#c6c6c6"></div>
<svg style="position:absolute;left:2180px;top:430px" width="16" height="16" viewBox="0 0 16 16"><path d="M2,1.7 H12.5 L14,3.2 V14 H2 Z" fill="#a9a9a9"/><rect x="4.4" y="3" width="7.2" height="4" fill="#f0f0f0"/><rect x="4.4" y="9" width="7.2" height="5" fill="#f0f0f0"/><rect x="8.5" y="10.8" width="1.7" height="1.8" fill="#a9a9a9"/></svg>
<svg style="position:absolute;left:2170px;top:524px" width="30" height="26" viewBox="0 0 30 26"><path d="M7.5,13.5 V7.6 H18.4 V18.4 H12.2" fill="none" stroke="#3a78c8" stroke-width="1.1"/><rect x="7.6" y="15.3" width="3" height="3" fill="none" stroke="#707070" stroke-width="1.1"/><path d="M10,15.6 L14.5,11.2 M11.5,11 H14.8 V14.3" fill="none" stroke="#707070" stroke-width="1.5"/></svg>
<svg style="position:absolute;left:1980px;top:708px" width="20" height="20" viewBox="0 0 20 20"><circle cx="10.2" cy="11.8" r="5.6" fill="none" stroke="#fff" stroke-width="1.5"/><path d="M8.2,3.6 H12.2 M10.2,3.8 V6.2 M10.2,8.8 V12 M15.3,6 L16.3,5" stroke="#fff" stroke-width="1.4"/></svg>
<svg style="position:absolute;left:2000px;top:709.5px" width="16" height="20" viewBox="0 0 16 20"><path d="M2,4 H7 L13,10 L8.5,14.5 L2.5,8.5 Z" fill="none" stroke="#fff" stroke-width="1.2"/><circle cx="5" cy="6.8" r="0.9" fill="#fff"/></svg>
</body></html>
